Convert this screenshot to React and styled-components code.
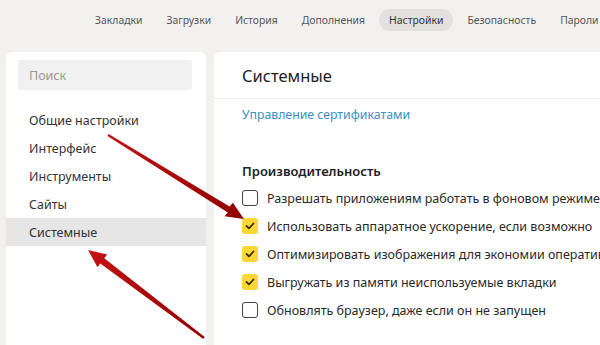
import React from "react";
import styled, { createGlobalStyle } from "styled-components";

const Global = createGlobalStyle`
  html, body { margin: 0; padding: 0; }
  body {
    background: #f2f1f0;
    font-family: "Noto Sans", "Open Sans", sans-serif;
    color: #222;
    width: 600px;
    height: 345px;
    overflow: hidden;
  }
`;

const Page = styled.div`
  position: relative;
  width: 600px;
  height: 345px;
  overflow: hidden;
  display: flex;
  flex-direction: column;
`;

const Nav = styled.nav`
  height: 40px;
  flex: none;
  display: flex;
  align-items: center;
  padding-left: 85px;
  gap: 4px;
  white-space: nowrap;
  overflow: hidden;
`;

const NavItem = styled.div`
  flex: none;
  font-size: 10.4px;
  padding: 4px 10px;
  border-radius: 12px;
  background: ${(p) => (p.$active ? "#e2e1e0" : "transparent")};
  color: ${(p) => (p.$active ? "#333" : "#555")};
`;

const Body = styled.div`
  flex: 1;
  display: flex;
  gap: 8px;
  padding: 12px 0 0 6px;
  min-width: 0;
`;

const Sidebar = styled.aside`
  flex: none;
  width: 200px;
  background: #fff;
  border-radius: 6px 6px 0 0;
  padding-top: 8px;
  display: flex;
  flex-direction: column;
`;

const Search = styled.div`
  margin: 0 14px 0 12px;
  height: 30px;
  background: #f0f0f0;
  border-radius: 3px;
  display: flex;
  align-items: center;
  padding-left: 11px;
  font-size: 12.5px;
  color: #999;
`;

const Menu = styled.div`
  margin-top: 16px;
  display: flex;
  flex-direction: column;
`;

const MenuItem = styled.div`
  height: 28px;
  display: flex;
  align-items: center;
  padding-left: 23px;
  font-size: 12.5px;
  color: #333;
  white-space: nowrap;
  background: ${(p) => (p.$active ? "#e6e6e6" : "transparent")};
`;

const Main = styled.main`
  flex: 1;
  min-width: 0;
  background: #fff;
  border-radius: 6px 0 0 0;
  display: flex;
  flex-direction: column;
  overflow: hidden;
`;

const Header = styled.div`
  height: 46px;
  flex: none;
  display: flex;
  align-items: center;
  padding-left: 28px;
  font-size: 16.5px;
  color: #222;
  border-bottom: 1px solid #ececec;
`;

const Content = styled.div`
  padding: 6px 0 0 28px;
  display: flex;
  flex-direction: column;
`;

const Link = styled.div`
  font-size: 12.3px;
  color: #3a8fc4;
  height: 20px;
  line-height: 20px;
`;

const SectionTitle = styled.div`
  margin-top: 36px;
  font-size: 13px;
  font-weight: 600;
  color: #222;
  height: 20px;
  line-height: 20px;
`;

const Options = styled.div`
  margin-top: 3px;
  display: flex;
  flex-direction: column;
`;

const Option = styled.div`
  height: 28px;
  display: flex;
  align-items: center;
  gap: 9px;
  white-space: nowrap;
  font-size: 12.5px;
  color: #2a2a2a;
`;

const Box = styled.span`
  width: 16px;
  height: 16px;
  box-sizing: border-box;
  border-radius: 3px;
  flex: none;
  display: flex;
  align-items: center;
  justify-content: center;
  background: ${(p) => (p.$checked ? "#fdd835" : "#fff")};
  border: ${(p) => (p.$checked ? "none" : "1.5px solid #444")};
`;

const Overlay = styled.svg`
  position: absolute;
  left: 0;
  top: 0;
  pointer-events: none;
`;

const Check = () => (
  <svg width="10" height="8" viewBox="0 0 10 8">
    <path d="M1.5 4 L4 6.3 L8.5 1.5" fill="none" stroke="#3a2a00" strokeWidth="1.8" strokeLinecap="round" strokeLinejoin="round" />
  </svg>
);

const nav = ["Закладки", "Загрузки", "История", "Дополнения", "Настройки", "Безопасность", "Пароли"];
const menu = ["Общие настройки", "Интерфейс", "Инструменты", "Сайты", "Системные"];
const options = [
  ["Разрешать приложениям работать в фоновом режиме", false],
  ["Использовать аппаратное ускорение, если возможно", true],
  ["Оптимизировать изображения для экономии оперативной памяти", true],
  ["Выгружать из памяти неиспользуемые вкладки", true],
  ["Обновлять браузер, даже если он не запущен", false],
];

export default function App() {
  return (
    <Page>
      <Global />
      <Nav>
        {nav.map((n) => (
          <NavItem key={n} $active={n === "Настройки"}>{n}</NavItem>
        ))}
      </Nav>
      <Body>
        <Sidebar>
          <Search>Поиск</Search>
          <Menu>
            {menu.map((m) => (
              <MenuItem key={m} $active={m === "Системные"}>{m}</MenuItem>
            ))}
          </Menu>
        </Sidebar>
        <Main>
          <Header>Системные</Header>
          <Content>
            <Link>Управление сертификатами</Link>
            <SectionTitle>Производительность</SectionTitle>
            <Options>
              {options.map(([t, c]) => (
                <Option key={t}>
                  <Box $checked={c}>{c && <Check />}</Box>
                  {t}
                </Option>
              ))}
            </Options>
          </Content>
        </Main>
      </Body>
      <Overlay width="600" height="345" viewBox="0 0 600 345">
        <defs>
          <linearGradient id="ag" x1="0" y1="0" x2="1" y2="1">
            <stop offset="0" stopColor="#c41414" />
            <stop offset="1" stopColor="#900000" />
          </linearGradient>
        </defs>
        <polygon points="108.6,134 229.6,206.6 232.9,202.7 244,219 224.5,216.3 227.8,212.4 107.4,136" fill="url(#ag)" />
        <polygon points="204.7,337.05 104.3,258.3 107.1,254.5 88,250 97.5,267.3 100.3,263.5 203.3,338.95" fill="url(#ag)" />
      </Overlay>
    </Page>
  );
}
